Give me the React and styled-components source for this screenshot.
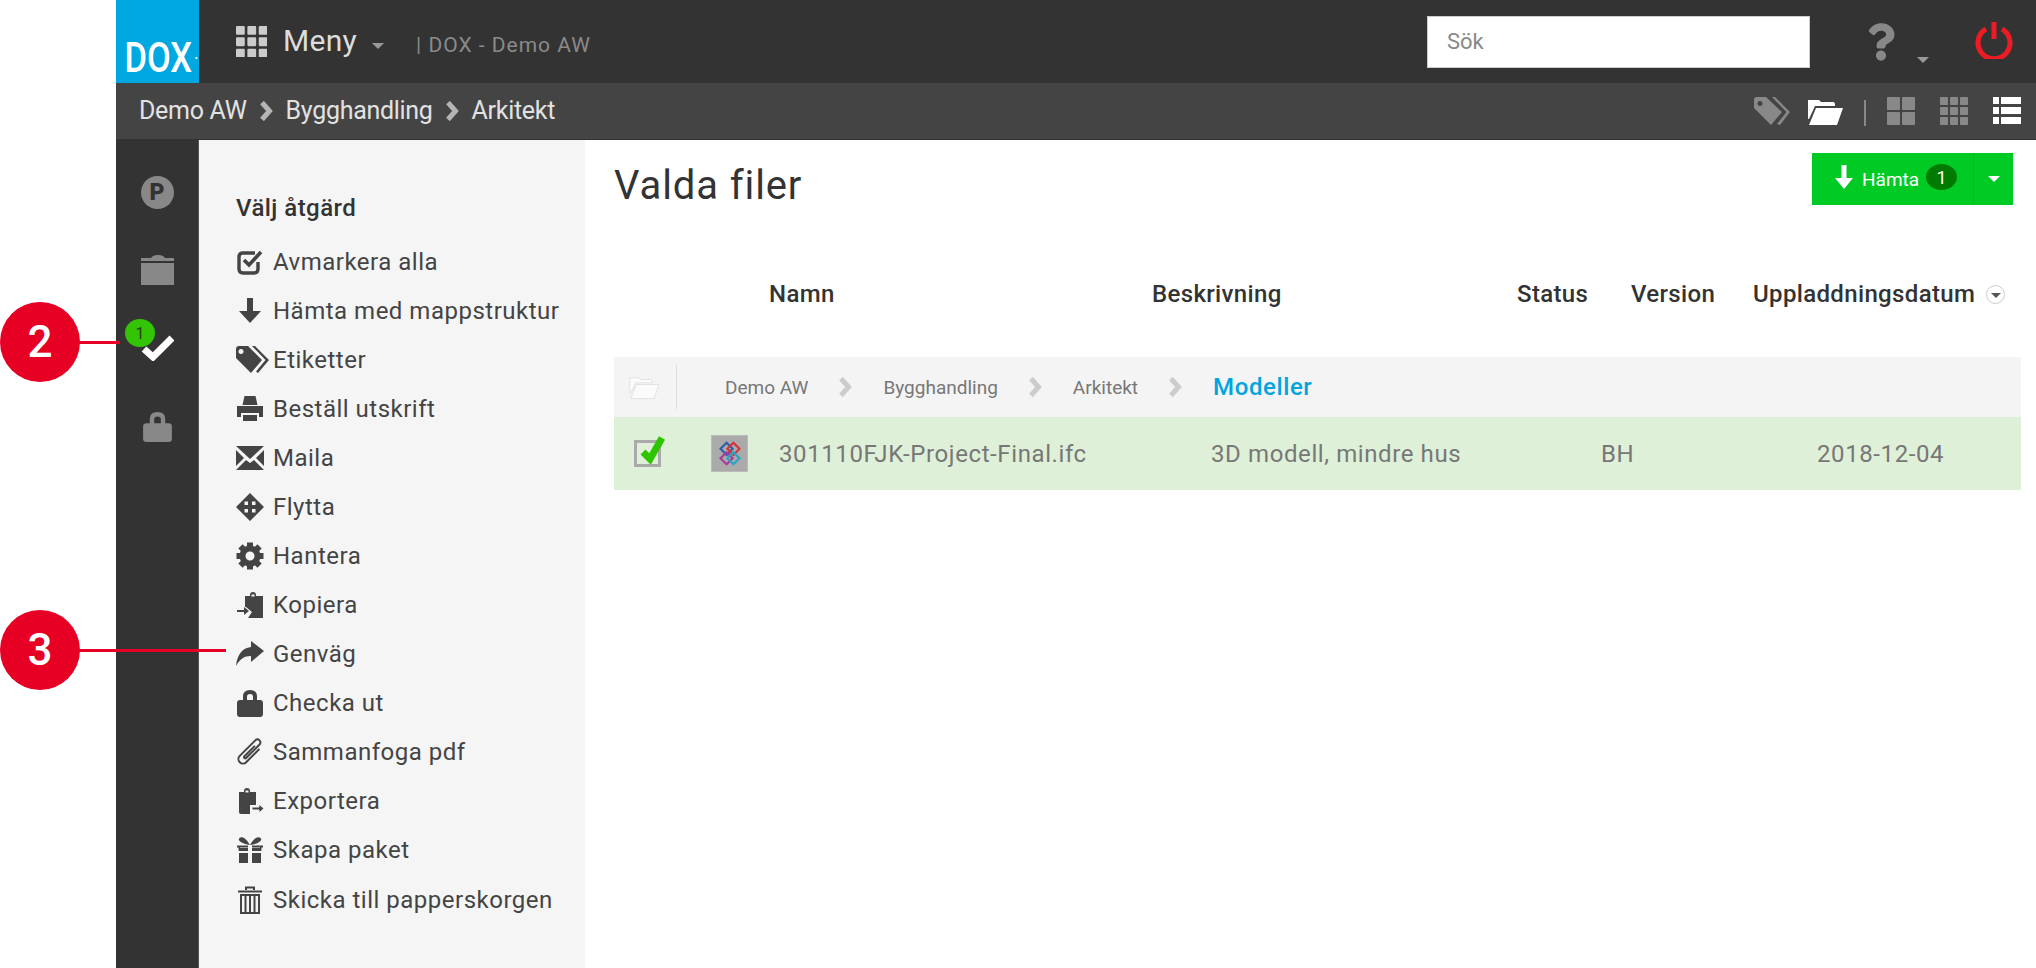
import React from 'react'
import styled, { createGlobalStyle } from 'styled-components'
import { FaQuestion } from 'react-icons/fa'

const GlobalStyle = createGlobalStyle`
  html, body {
    margin: 0;
    padding: 0;
    background: #fff;
    overflow: hidden;
  }
  * { box-sizing: border-box; }
  body {
    font-family: Roboto, "Liberation Sans", sans-serif;
    color: #333;
  }
`

const Page = styled.div`
  position: relative;
  width: 2036px;
  height: 968px;
  padding-left: 116px;
  display: flex;
  flex-direction: column;
  overflow: hidden;
`

// top bars
const TopBar = styled.header`
  height: 83px;
  background: #333;
  display: flex;
  align-items: center;
  flex: none;
`
const Logo = styled.div`
  width: 83px;
  height: 83px;
  background: #00a8e1;
  display: flex;
  align-items: flex-end;
  justify-content: center;
  color: #fff;
  font-size: 42px;
  font-weight: 500;
  line-height: 1;
  padding-bottom: 4px;
  span {
    display: inline-block;
    transform: scaleX(0.82);
  }
  small {
    font-size: 14px;
    margin-left: -5px;
    margin-bottom: 14px;
  }
`
const MenuButton = styled.div`
  display: flex;
  align-items: center;
  margin-left: 37px;
  color: #ddd;
  font-size: 30px;
  line-height: 1;
  letter-spacing: 0.3px;
`
const MenuLabel = styled.span`
  margin-left: 16px;
  margin-top: -2px;
`
const Caret = styled.i`
  display: inline-block;
  width: 0;
  height: 0;
  border-left: ${(p) => p.$size || 6}px solid transparent;
  border-right: ${(p) => p.$size || 6}px solid transparent;
  border-top: ${(p) => p.$size || 6}px solid ${(p) => p.$color || '#999'};
`
const MenuCaret = styled.span`
  margin-left: 15px;
  margin-top: 8px;
  display: flex;
`
const SiteName = styled.div`
  margin-left: 32px;
  margin-top: 7px;
  color: #8a8a8a;
  font-size: 21px;
  letter-spacing: 1px;
`
const TopRight = styled.div`
  margin-left: auto;
  display: flex;
  align-items: center;
  padding-right: 23px;
`
const Search = styled.div`
  width: 383px;
  height: 52px;
  background: #fff;
  border: 1px solid #ccc;
  color: #888;
  font-size: 22px;
  display: flex;
  align-items: center;
  padding-left: 19px;
`
const Help = styled.div`
  display: flex;
  align-items: flex-end;
  margin-left: 57px;
  color: #888;
  svg { width: 28px; height: 38px; display: block; }
`
const HelpCaret = styled.span`
  display: flex;
  margin-left: 22px;
  margin-bottom: -2px;
`
const Power = styled.svg`
  width: 38px;
  height: 38px;
  margin-left: 46px;
  margin-top: -3px;
  display: block;
`
const CrumbBar = styled.div`
  height: 57px;
  background: #444;
  border-bottom: 1px solid #333;
  display: flex;
  align-items: center;
  padding: 0 15px 0 23px;
  flex: none;
  color: #e2e2e2;
  font-size: 25px;
  letter-spacing: -0.3px;
`
const Crumb = styled.span`
  line-height: 1;
  margin-top: -1px;
`
const Chevron = styled.svg`
  width: ${(p) => p.$w || 15}px;
  height: ${(p) => p.$h || 20}px;
  margin: 0 ${(p) => p.$gap || 12}px;
  display: block;
  flex: none;
`
const ViewTools = styled.div`
  margin-left: auto;
  display: flex;
  align-items: center;
  gap: 0;
`
const ToolIcon = styled.svg`
  height: ${(p) => p.$h || 28}px;
  width: ${(p) => p.$w || 28}px;
  margin-left: ${(p) => p.$ml || 0}px;
  display: block;
`
const ToolDivider = styled.span`
  width: 2px;
  height: 26px;
  background: #888;
  margin-left: 21px;
  margin-top: 4px;
`

// body
const Body = styled.div`
  flex: 1;
  display: flex;
  min-height: 0;
`
const Rail = styled.nav`
  width: 83px;
  background: #333;
  border-right: 1px solid #555;
  padding-top: 13px;
  flex: none;
  display: flex;
  flex-direction: column;
  align-items: center;
`
const RailItem = styled.div`
  position: relative;
  width: 100%;
  height: 78px;
  display: flex;
  align-items: center;
  justify-content: center;
`
const ParkBadge = styled.div`
  width: 33px;
  height: 33px;
  border-radius: 50%;
  background: #888;
  color: #333;
  font-weight: 900;
  font-size: 23px;
  display: flex;
  align-items: center;
  justify-content: center;
`
const RailCount = styled.span`
  position: absolute;
  left: 9px;
  top: 10px;
  width: 30px;
  height: 28px;
  border-radius: 50%;
  background: #33c406;
  color: #24420f;
  font-size: 16px;
  display: flex;
  align-items: center;
  justify-content: center;
`
const Panel = styled.aside`
  width: 386px;
  flex: none;
  background: #f5f5f5;
  padding: 51px 0 0 37px;
`
const PanelTitle = styled.div`
  font-size: 24px;
  font-weight: 500;
  line-height: 34px;
  height: 46px;
  color: #333;
  letter-spacing: 0.45px;
`
const ActionList = styled.ul`
  list-style: none;
  margin: 0;
  padding: 0;
`
const Action = styled.li`
  height: 49.08px;
  display: flex;
  align-items: center;
  font-size: 24px;
  color: #444;
  letter-spacing: 0.5px;
  white-space: nowrap;
`
const ActionIcon = styled.span`
  width: 37px;
  flex: none;
  display: flex;
  svg { display: block; width: 28px; height: 28px; color: #444; overflow: visible; }
`
const Main = styled.main`
  flex: 1;
  min-width: 0;
  padding: 13px 15px 0 29px;
`
const MainHead = styled.div`
  display: flex;
  align-items: center;
  justify-content: space-between;
  padding-right: 8px;
  height: 52px;
`
const Title = styled.h1`
  margin: 12px 0 0;
  font-size: 40px;
  font-weight: 400;
  letter-spacing: 0.9px;
  color: #333;
`
const SplitButton = styled.div`
  width: 201px;
  height: 52px;
  background: #00cb25;
  color: #fff;
  display: flex;
`
const ButtonMain = styled.div`
  width: 161px;
  display: flex;
  align-items: center;
  padding-left: 23px;
  font-size: 19px;
  svg { width: 18px; height: 24px; display: block; margin-right: 9px; margin-top: -4px; }
`
const ButtonCount = styled.span`
  width: 31px;
  height: 26px;
  border-radius: 50%;
  background: #007a00;
  margin-left: 7px;
  margin-top: -4px;
  font-size: 18px;
  display: flex;
  align-items: center;
  justify-content: center;
`
const ButtonCaret = styled.div`
  flex: 1;
  border-left: 1px solid #22a63a;
  display: flex;
  align-items: center;
  justify-content: center;
`
const ColumnRow = styled.div`
  display: grid;
  grid-template-columns: 383px 365px 114px 122px 1fr;
  padding-left: 155px;
  margin-top: 73px;
  height: 32px;
  align-items: center;
  font-size: 24px;
  font-weight: 500;
  color: #333;
  letter-spacing: 0.35px;
`
const SortCell = styled.div`
  display: flex;
  align-items: center;
  white-space: nowrap;
`
const SortIcon = styled.span`
  width: 19px;
  height: 19px;
  border-radius: 50%;
  border: 1px solid #ccc;
  margin-left: 11px;
  display: flex;
  align-items: center;
  justify-content: center;
  padding-top: 3px;
`
const GroupRow = styled.div`
  margin-top: 47px;
  height: 60px;
  background: #f4f4f4;
  display: flex;
  align-items: center;
  padding-left: 15px;
  color: #777;
  font-size: 19px;
`
const GroupFolder = styled.svg`
  width: 30px;
  height: 26px;
  display: block;
`
const GroupDivider = styled.span`
  width: 1px;
  height: 44px;
  background: #ddd;
  margin: 0 48px 0 17px;
`
const Current = styled.span`
  color: #00a5df;
  font-size: 24px;
  font-weight: 500;
  letter-spacing: 0.6px;
`
const FileRow = styled.div`
  height: 73px;
  background: #dff0d8;
  display: grid;
  grid-template-columns: 77px 68px 432px 390px 216px 1fr;
  align-items: center;
  padding-left: 20px;
  color: #777;
  font-size: 24px;
  letter-spacing: 0.6px;
`
const CheckBox = styled.span`
  position: relative;
  display: block;
  width: 27px;
  height: 27px;
  border: 3px solid #aaa;
  svg {
    position: absolute;
    left: 3px;
    top: -8px;
    width: 26px;
    height: 30px;
  }
`
const Thumb = styled.span`
  width: 37px;
  height: 37px;
  background: #aaa;
  border: 1px solid #bbb;
  display: flex;
  align-items: center;
  justify-content: center;
  svg { width: 24px; height: 26px; display: block; }
`

// numbered callouts that sit over the screenshot
const Callout = styled.div`
  position: absolute;
  left: 0;
  top: ${(p) => p.$top}px;
  width: 80px;
  height: 80px;
  border-radius: 50%;
  background: #e60024;
  color: #fff;
  font-size: 44px;
  font-weight: 500;
  display: flex;
  align-items: center;
  justify-content: center;
  z-index: 2;
  &::after {
    content: '';
    position: absolute;
    left: 78px;
    top: 39px;
    height: 3px;
    width: ${(p) => p.$line}px;
    background: #e60024;
  }
`

const icon = (children) => (
  <svg viewBox="0 0 28 28" fill="currentColor" aria-hidden="true">
    {children}
  </svg>
)

const lockPath =
  'M7 11V7.500Q7 1 14 1t7 6.500V11h3q3 0 3 3v11q0 3-3 3H4q-3 0-3-3V14q0-3 3-3zM11 11h6V7.500Q17 5 14 5t-3 2.500z'

const gearTeeth = [0, 45, 90, 135, 180, 225, 270, 315]

const actions = [
  {
    label: 'Avmarkera alla',
    icon: icon(
      <>
        <path d="M22 14v7q0 4-4 4H7q-4 0-4-4V9q0-4 4-4h12" fill="none" stroke="currentColor" strokeWidth="3.400" />
        <path d="M8 12l5 5L25 4" fill="none" stroke="currentColor" strokeWidth="3.600" />
      </>
    ),
  },
  { label: 'Hämta med mappstruktur', icon: icon(<path d="M11 1h6v13h8L14 26 3 14h8z" />) },
  {
    label: 'Etiketter',
    icon: icon(
      <>
        <path fillRule="evenodd" d="M0 3Q0 0 3 0h9l14 14-11 13L0 12zM5 3a2.500 2.500 0 1 0 .01 0z" />
        <path d="M16 0h3l14 14-11 13-2-1.500L29.500 14z" />
      </>
    ),
  },
  {
    label: 'Beställ utskrift',
    icon: icon(
      <>
        <path d="M8.500 1h11l2 9h-15z" />
        <path d="M1 11h26v11h-4v-4H5v4H1z" />
        <path d="M7 20h14v6H7z" />
      </>
    ),
  },
  {
    label: 'Maila',
    icon: icon(
      <>
        <path d="M0 2h28L14 15z" />
        <path d="M0 6l8 8-8 8zM28 6l-8 8 8 8z" />
        <path d="M0 26l10-10 4 3 4-3 10 10z" />
      </>
    ),
  },
  {
    label: 'Flytta',
    icon: icon(
      <path
        fillRule="evenodd"
        d="M14 0l14 14-14 14L0 14zM8.500 8.500V12H12V8.500zM16 8.500V12h3.500V8.500zM8.500 16v3.500H12V16zM16 16v3.500h3.500V16z"
      />
    ),
  },
  {
    label: 'Hantera',
    icon: icon(
      <>
        <circle cx="14" cy="14" r="7.500" fill="none" stroke="currentColor" strokeWidth="6" />
        {gearTeeth.map((a) => (
          <rect key={a} x="11" y="0.500" width="6" height="6" transform={`rotate(${a} 14 14)`} />
        ))}
      </>
    ),
  },
  {
    label: 'Kopiera',
    icon: icon(
      <>
        <path fillRule="evenodd" d="M9 5h5V4q0-3 3-3t3 3v1h7v22H12l4-6-6-5H9zM15.500 3.500v2h3v-2z" />
        <path d="M1 19h7v-3l5 4-5 4v-3H1z" />
      </>
    ),
  },
  {
    label: 'Genväg',
    icon: icon(<path d="M28 11 15 1v6C6 8 1 15 0 26c4-7 8-10 15-10v6z" />),
  },
  { label: 'Checka ut', icon: icon(<path fillRule="evenodd" d={lockPath} />) },
  {
    label: 'Sammanfoga pdf',
    icon: icon(
      <path
        d="M18.500 6V24a4.500 4.500 0 0 1-9 0V2a3 3 0 0 1 6 0V21a1.200 1.200 0 0 1-2.400 0V7"
        transform="rotate(45 14 14)"
        fill="none"
        stroke="currentColor"
        strokeWidth="2"
        strokeLinecap="round"
      />
    ),
  },
  {
    label: 'Exportera',
    icon: icon(
      <>
        <path fillRule="evenodd" d="M3 5h5V4q0-3 3-3t3 3v1h6v13h-6v9H5q-2 0-2-2zM9.500 3.500v2h3v-2z" />
        <path d="M16 20h7v-3l5 4.500-5 4.500v-3h-7z" stroke="#f5f5f5" strokeWidth="1" />
      </>
    ),
  },
  {
    label: 'Skapa paket',
    icon: icon(
      <>
        <path d="M14 9C10 2 6 0 3.500 2S5 8 14 9zM14 9c4-7 8-9 10.500-7S23 8 14 9z" />
        <path d="M1 9.500h11v2H4v3H2.500v-3H1zM16 9.500h11v2h-1.500v3H24v-3h-8z" />
        <path d="M3 12h9v3H3zM16 12h9v3h-9zM3 17h9v10H3zM16 17h9v10h-9z" />
      </>
    ),
  },
  {
    label: 'Skicka till papperskorgen',
    icon: icon(
      <>
        <path d="M10 4V1.500h8V4" fill="none" stroke="currentColor" strokeWidth="2" />
        <path d="M2 4.500h24v2H2z" />
        <path d="M5 9h18v18H5z" fill="none" stroke="currentColor" strokeWidth="2" />
        <path d="M9.500 10v16M14 10v16M18.500 10v16" stroke="currentColor" strokeWidth="2" />
      </>
    ),
  },
]

const ChevronIcon = ({ color, ...rest }) => (
  <Chevron viewBox="0 0 15 20" {...rest}>
    <path d="M3 1.500 10.500 10 3 18.500" fill="none" stroke={color} strokeWidth="5" />
  </Chevron>
)

const GridIcon = ({ n, gap, ml }) => {
  const size = (28 - gap * (n - 1)) / n
  const cells = []
  for (let r = 0; r < n; r++) {
    for (let c = 0; c < n; c++) {
      cells.push(<rect key={`${r}-${c}`} x={c * (size + gap)} y={r * (size + gap)} width={size} height={size} rx="0.8" />)
    }
  }
  return (
    <ToolIcon viewBox="0 0 28 28" fill="#888" $ml={ml}>
      {cells}
    </ToolIcon>
  )
}

const App = () => {
  return (
    <Page>
      <GlobalStyle />
      <Callout $top={302} $line={42}>2</Callout>
      <Callout $top={610} $line={148}>3</Callout>

      <TopBar>
        <Logo>
          <span>DOX</span>
          <small>·</small>
        </Logo>
        <MenuButton>
          <ToolIcon viewBox="0 0 30 30" fill="#ccc" $w={31} $h={31}>
            {[0, 11, 22].map((y) =>
              [0, 11, 22].map((x) => <rect key={`${x}-${y}`} x={x} y={y} width="8.500" height="8.500" rx="1" />)
            )}
          </ToolIcon>
          <MenuLabel>Meny</MenuLabel>
          <MenuCaret>
            <Caret $size={6} />
          </MenuCaret>
        </MenuButton>
        <SiteName>| DOX - Demo AW</SiteName>
        <TopRight>
          <Search>Sök</Search>
          <Help>
            <FaQuestion />
            <HelpCaret>
              <Caret $size={6} />
            </HelpCaret>
          </Help>
          <Power viewBox="0 0 38 38">
            <path d="M11 8a16 16 0 1 0 16 0" fill="none" stroke="#ed1c24" strokeWidth="5" />
            <path d="M19 1v17" stroke="#ed1c24" strokeWidth="5" />
          </Power>
        </TopRight>
      </TopBar>

      <CrumbBar>
        <Crumb>Demo AW</Crumb>
        <ChevronIcon color="#b5b5b5" $gap={12} />
        <Crumb>Bygghandling</Crumb>
        <ChevronIcon color="#b5b5b5" $gap={12} />
        <Crumb>Arkitekt</Crumb>
        <ViewTools>
          <ToolIcon viewBox="0 0 36 28" $w={36}>
            <path fill="#888" fillRule="evenodd" d="M0 2.500Q0 0 2.500 0H12l16 15-11 13L0 11zM6 4a2.500 2.500 0 1 0 .01 0z" />
            <path fill="#888" d="M18 0h3l15 15-10 13-3-1 9.500-12z" />
          </ToolIcon>
          <ToolIcon viewBox="0 0 36 28" $w={36} $ml={17} fill="#fff">
            <path d="M1 3h11l2 2h12q2 0 2 2v2H8L2 22H1z" />
            <path d="M9 11h27l-6 17H2z" />
          </ToolIcon>
          <ToolDivider />
          <GridIcon n={2} gap={2} ml={21} />
          <GridIcon n={3} gap={2} ml={25} />
          <ToolIcon viewBox="0 0 28 28" fill="#fff" $ml={25}>
            <path d="M0 0h6v7H0zM8 0h20v7H8zM0 10h6v7H0zM8 10h20v7H8zM0 20h6v7H0zM8 20h20v7H8z" />
          </ToolIcon>
        </ViewTools>
      </CrumbBar>

      <Body>
        <Rail>
          <RailItem>
            <ParkBadge>P</ParkBadge>
          </RailItem>
          <RailItem>
            <ToolIcon viewBox="0 0 33 30" fill="#888" $w={33} $h={30}>
              <path d="M0 3h10q2-3 6-3h2q4 0 6 3h9v3H0zM0 8h33v22H0z" />
            </ToolIcon>
          </RailItem>
          <RailItem>
            <ToolIcon viewBox="0 0 33 26" fill="none" $w={33} $h={26}>
              <path d="M3 14l9 8L31 3" stroke="#fff" strokeWidth="7" />
            </ToolIcon>
            <RailCount>1</RailCount>
          </RailItem>
          <RailItem>
            <ToolIcon viewBox="0 0 28 28" fill="#888" $w={31} $h={33}>
              <path fillRule="evenodd" d={lockPath} />
            </ToolIcon>
          </RailItem>
        </Rail>

        <Panel>
          <PanelTitle>Välj åtgärd</PanelTitle>
          <ActionList>
            {actions.map((a) => (
              <Action key={a.label}>
                <ActionIcon>{a.icon}</ActionIcon>
                {a.label}
              </Action>
            ))}
          </ActionList>
        </Panel>

        <Main>
          <MainHead>
            <Title>Valda filer</Title>
            <SplitButton>
              <ButtonMain>
                <svg viewBox="0 0 18 24" fill="#fff">
                  <path d="M6.500 0h5v13H18l-9 11-9-11h6.500z" />
                </svg>
                Hämta
                <ButtonCount>1</ButtonCount>
              </ButtonMain>
              <ButtonCaret>
                <Caret $size={6} $color="#fff" />
              </ButtonCaret>
            </SplitButton>
          </MainHead>

          <ColumnRow>
            <div>Namn</div>
            <div>Beskrivning</div>
            <div>Status</div>
            <div>Version</div>
            <SortCell>
              Uppladdningsdatum
              <SortIcon>
                <Caret $size={5} $color="#555" />
              </SortIcon>
            </SortCell>
          </ColumnRow>

          <GroupRow>
            <GroupFolder viewBox="0 0 36 28" fill="#fbfbfb" stroke="#ddd" strokeWidth="1">
              <path d="M1 3h11l2 2h12q2 0 2 2v2H8L2 22H1z" />
              <path d="M9 11h27l-6 17H2z" />
            </GroupFolder>
            <GroupDivider />
            <span>Demo AW</span>
            <ChevronIcon color="#ccc" $gap={30} />
            <span>Bygghandling</span>
            <ChevronIcon color="#ccc" $gap={30} />
            <span>Arkitekt</span>
            <ChevronIcon color="#ccc" $gap={30} />
            <Current>Modeller</Current>
          </GroupRow>

          <FileRow>
            <CheckBox>
              <svg viewBox="0 0 26 30" fill="none">
                <path d="M3 17l7 7L22 3" stroke="#2ec500" strokeWidth="7" />
              </svg>
            </CheckBox>
            <Thumb>
              <svg viewBox="0 0 28 30" fill="none" strokeWidth="2.500">
                <rect x="5" y="4" width="10" height="10" transform="rotate(45 10 9)" stroke="#2c5fa8" />
                <rect x="13" y="4" width="10" height="10" transform="rotate(45 18 9)" stroke="#d8323c" />
                <rect x="5" y="15" width="10" height="10" transform="rotate(45 10 20)" stroke="#a83a9a" />
                <rect x="13" y="15" width="10" height="10" transform="rotate(45 18 20)" stroke="#2ca3c4" />
              </svg>
            </Thumb>
            <div>301110FJK-Project-Final.ifc</div>
            <div>3D modell, mindre hus</div>
            <div>BH</div>
            <div>2018-12-04</div>
          </FileRow>
        </Main>
      </Body>
    </Page>
  )
}

export default App
